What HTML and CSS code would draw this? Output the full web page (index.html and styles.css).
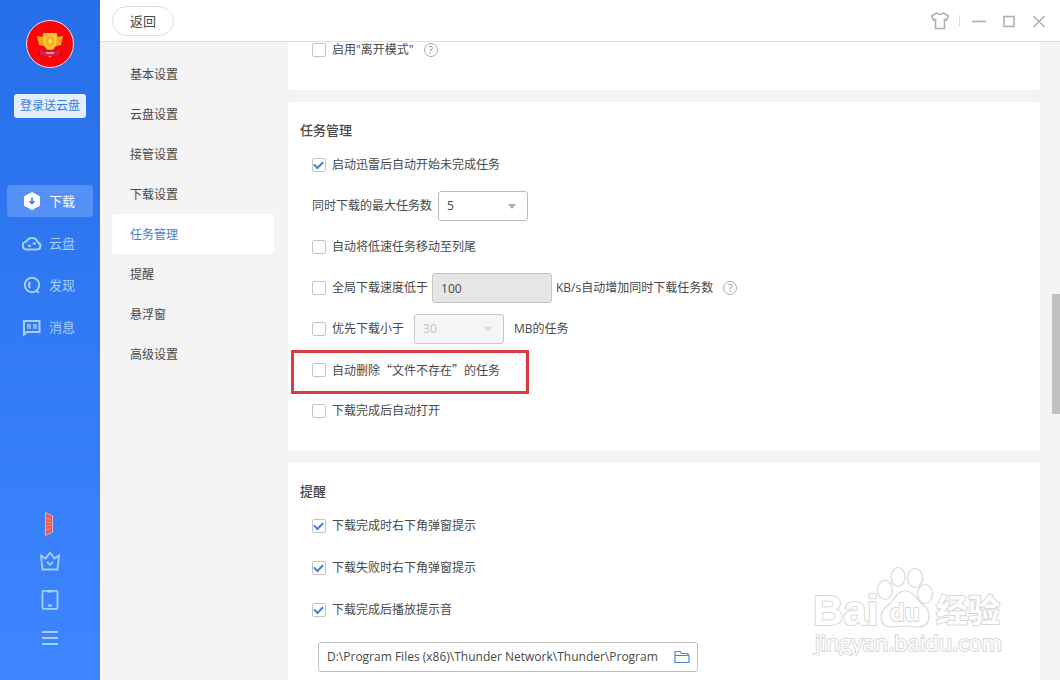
FILE: index.html
```html
<!DOCTYPE html>
<html lang="zh-CN">
<head>
    <meta charset="utf-8">
    <title>任务管理</title>
    <link rel="stylesheet" href="styles.css">
</head>
<body>
    <aside class="sidebar">
        <svg class="avatar" viewBox="0 0 48 48" role="img" aria-label="avatar">
            <circle cx="24" cy="24" r="23.5" fill="#fb0509" stroke="#f3dff0"/>
            <path d="M12 36l3-6h18l3 6-5-1-7 2-7-2z" fill="#a80f2c"/>
            <path d="M11 16l5 1 2-4h12l2 4 5-1-2 9-5 1-3 4h-6l-3-4-5-1z" fill="#f5a81c"/>
            <path d="M17 13h14l-1 12-4 4h-4l-4-4z" fill="#ffc52e"/>
            <path d="M24 15l4 3v6l-4 3-4-3v-6z" fill="#f7b020"/>
            <path d="M24 17l2 4-2 4-2-4z" fill="#ffd95a"/>
            <path d="M14 30q10 2 20 0v5q-10 2-20 0z" fill="#d91f45"/>
            <path d="M20 33h8" stroke="#f7a3b0" stroke-width="1.5"/>
            <path d="M22 36h4l-2 1.500z" fill="#f5a81c"/>
        </svg>
        <button class="login">登录送云盘</button>

        <nav class="menu">
            <a href="#" class="active">
                <svg width="20" height="20" viewBox="0 0 20 20">
                    <path d="M10 1.500l7.500 4v9l-7.500 4-7.500-4v-9z" fill="#fff" stroke="#fff" stroke-linejoin="round"/>
                    <path d="M10 6.500v6M7.500 10l2.500 2.600 2.500-2.600" fill="none" stroke="#3b7cf0" stroke-width="1.600"/>
                </svg>下载</a>
            <a href="#">
                <svg width="20" height="20" viewBox="0 0 20 20" class="line">
                    <path d="M5 16.500a4 4 0 0 1-.5-8 6 6 0 0 1 11.300 1A3.600 3.600 0 0 1 15.500 16.500z"/>
                    <path d="M6 12.800h3M10.500 10.500h3.500"/>
                </svg>云盘</a>
            <a href="#">
                <svg width="20" height="20" viewBox="0 0 20 20" class="line">
                    <circle cx="10" cy="10" r="7.200"/>
                    <path d="M13.500 15l3.500 3M8 7q-2 3 0 6"/>
                </svg>发现</a>
            <a href="#">
                <svg width="20" height="20" viewBox="0 0 20 20" class="line">
                    <path d="M2 4h15.500v11H5l-3 2.500z"/>
                    <path d="M5 8h3v4M11 8h3v4M6 8v4M12 8v4" stroke-width="1.300"/>
                </svg>消息</a>
        </nav>

        <div class="tools">
            <button aria-label="活动">
                <svg width="20" height="26" viewBox="0 0 20 26">
                    <path d="M5.500 1.500L12.500 5v16l-7 3.500z" fill="#f4544c" stroke="#d9b4dc"/>
                    <path d="M7 7l4 2M7 11l4 1M7 15l4-1M7 19l4-2" stroke="#ff9d7c" stroke-width="1.200"/>
                </svg>
            </button>
            <button aria-label="会员">
                <svg width="22" height="20" viewBox="0 0 22 20" class="line thin">
                    <path d="M2 3.500l4.500 3L11 .8l4.500 5.700 4.500-3-1.500 14h-15z"/>
                    <path d="M8 9.800l3 3 3-3"/>
                </svg>
            </button>
            <button aria-label="手机">
                <svg width="20" height="20" viewBox="0 0 20 20" class="line thin">
                    <rect x="2.500" y="0.800" width="15" height="18" rx="1"/>
                    <path d="M7 1.500h6M8 15.500h4"/>
                </svg>
            </button>
            <button aria-label="菜单">
                <svg width="20" height="20" viewBox="0 0 20 20" class="line thin">
                    <path d="M2 4h16M2 10h16M2 16h16"/>
                </svg>
            </button>
        </div>
    </aside>

    <div class="window">
        <header class="topbar">
            <button class="back">返回</button>
            <div class="controls">
                <button aria-label="皮肤">
                    <svg width="20" height="20" viewBox="0 0 20 20">
                        <path d="M6.500 2q3.500 3 7 0l5 3-2 4-2-.5v9h-9v-9l-2 .5-2-4z"/>
                    </svg>
                </button>
                <span class="divider"></span>
                <button aria-label="最小化">
                    <svg width="14" height="20" viewBox="0 0 14 20"><path d="M0 10.500h14"/></svg>
                </button>
                <button aria-label="最大化">
                    <svg width="14" height="20" viewBox="0 0 14 20"><path d="M2 5.500h10v10H2z"/></svg>
                </button>
                <button aria-label="关闭">
                    <svg width="14" height="20" viewBox="0 0 14 20"><path d="M1.500 5l11 11M12.500 5l-11 11"/></svg>
                </button>
            </div>
        </header>

        <div class="body">
            <nav class="settings-nav">
                <a href="#">基本设置</a>
                <a href="#">云盘设置</a>
                <a href="#">接管设置</a>
                <a href="#">下载设置</a>
                <a href="#" class="active">任务管理</a>
                <a href="#">提醒</a>
                <a href="#">悬浮窗</a>
                <a href="#">高级设置</a>
            </nav>

            <main class="content">
                <section class="card card-cut">
                    <div class="row">
                        <label><input type="checkbox">启用"离开模式"</label>
                        <span class="help">?</span>
                    </div>
                </section>

                <section class="card card-tasks">
                    <h2>任务管理</h2>
                    <div class="rows">
                        <div class="row">
                            <label><input type="checkbox" checked>启动迅雷后自动开始未完成任务</label>
                        </div>
                        <div class="row">
                            <label for="max-tasks">同时下载的最大任务数</label>
                            <span class="select">
                                <select id="max-tasks"><option>5</option></select>
                            </span>
                        </div>
                        <div class="row">
                            <label><input type="checkbox">自动将低速任务移动至列尾</label>
                        </div>
                        <div class="row tight">
                            <label><input type="checkbox">全局下载速度低于</label>
                            <input type="text" class="speed" id="speed" value="100" disabled>
                            <label for="speed">KB/s自动增加同时下载任务数</label>
                            <span class="help">?</span>
                        </div>
                        <div class="row wide">
                            <label><input type="checkbox">优先下载小于</label>
                            <span class="select disabled">
                                <select id="size" disabled><option>30</option></select>
                            </span>
                            <label for="size">MB的任务</label>
                        </div>
                        <div class="row marked">
                            <label class="quoted"><input type="checkbox">自动删除“文件不存在”的任务</label>
                        </div>
                        <div class="row">
                            <label><input type="checkbox">下载完成后自动打开</label>
                        </div>
                    </div>
                </section>

                <section class="card card-notice">
                    <h2>提醒</h2>
                    <div class="rows">
                        <div class="row">
                            <label><input type="checkbox" checked>下载完成时右下角弹窗提示</label>
                        </div>
                        <div class="row">
                            <label><input type="checkbox" checked>下载失败时右下角弹窗提示</label>
                        </div>
                        <div class="row">
                            <label><input type="checkbox" checked>下载完成后播放提示音</label>
                        </div>
                    </div>
                    <div class="path">
                        <input type="text" aria-label="提示音" value="D:\Program Files (x86)\Thunder Network\Thunder\Program">
                        <button aria-label="浏览">
                            <svg width="16" height="14" viewBox="0 0 16 14">
                                <path d="M1 12.500v-11h5l1.500 2H14v2M1 5.500h14v7H1z" fill="none" stroke="#4a87d0" stroke-width="1.200"/>
                            </svg>
                        </button>
                    </div>
                </section>

                <div class="scroll-thumb"></div>

                <svg class="watermark" width="194" height="96" viewBox="0 0 194 96">
                    <text x="1" y="65" class="bai">Bai</text>
                    <ellipse cx="73" cy="30" rx="7.500" ry="9.500"/>
                    <ellipse cx="86" cy="17" rx="7" ry="9.500"/>
                    <ellipse cx="103" cy="18" rx="7.500" ry="9.500"/>
                    <ellipse cx="113" cy="34" rx="7.500" ry="9.500"/>
                    <path d="M93 31c9 0 12 9 18 14 10 8 7 22-5 22-7 0-7-1-13-1s-7 1-13 1c-13 0-14-14-5-21 7-5 9-15 18-15z"/>
                    <text x="78" y="61" class="du">du</text>
                    <text x="124" y="62" class="jy">经验</text>
                    <text x="3" y="91" class="url">jingyan.baidu.com</text>
                </svg>
            </main>
        </div>
    </div>
</body>
</html>
```

FILE: styles.css
```css
*, *::before, *::after {
    box-sizing: border-box;
}

body {
    margin: 0;
    height: 100vh;
    display: flex;
    overflow: hidden;
    background: #f4f4f4;
    color: #484848;
    font: 12px/18px "Open Sans", "Noto Sans CJK SC", sans-serif;
}

button, input, select {
    font: inherit;
    color: inherit;
    margin: 0;
}

button {
    padding: 0;
    border: 0;
    background: none;
    cursor: pointer;
}

a {
    color: inherit;
    text-decoration: none;
}

svg {
    display: block;
}

/* blue bar */
.sidebar {
    width: 100px;
    flex: none;
    padding: 20px 7px 32px;
    display: flex;
    flex-direction: column;
    align-items: center;
    background: linear-gradient(#266fe8, #3e85ff);
}

.avatar {
    width: 48px;
    height: 48px;
    flex: none;
}

.login {
    width: 72px;
    height: 24px;
    margin-top: 26px;
    border-radius: 3px;
    background: #e2effd;
    color: #3c7fd8;
}

.menu {
    align-self: stretch;
    margin-top: 67px;
    display: flex;
    flex-direction: column;
    gap: 10px;
}

.menu a {
    height: 32px;
    padding-left: 15px;
    display: flex;
    align-items: center;
    gap: 7px;
    border-radius: 4px;
    font-size: 13px;
    color: #a5d0fb;
}

.menu .active {
    background: #5490f5;
    color: #fff;
}

.line {
    fill: none;
    stroke: #a5d0fb;
    stroke-width: 2;
}

.thin {
    stroke-width: 1.8;
}

.tools {
    margin-top: auto;
    display: flex;
    flex-direction: column;
    align-items: center;
    gap: 18px;
}

.tools button {
    height: 20px;
    display: flex;
    align-items: center;
}

/* top bar */
.window {
    flex: 1;
    min-width: 0;
    display: flex;
    flex-direction: column;
}

.topbar {
    height: 42px;
    flex: none;
    padding: 0 14px 0 12px;
    display: flex;
    align-items: center;
    justify-content: space-between;
    background: #fff;
    border-bottom: 1px solid #dedede;
}

.back {
    width: 62px;
    height: 30px;
    border: 1px solid #dedede;
    border-radius: 15px;
    font-size: 13px;
}

.controls {
    display: flex;
    align-items: center;
    gap: 16px;
}

.controls svg {
    fill: none;
    stroke: #b0b0b0;
    stroke-width: 1.6;
}

.divider {
    width: 1px;
    height: 11px;
    margin: 0 -4px 0 -7px;
    background: #ddd;
}

.body {
    flex: 1;
    min-height: 0;
    display: flex;
}

.settings-nav {
    width: 188px;
    flex: none;
    padding: 12px 14px 0 12px;
}

.settings-nav a {
    height: 40px;
    padding: 2px 18px 0;
    display: flex;
    align-items: center;
    border-radius: 4px;
}

.settings-nav .active {
    background: #fff;
    color: #3f7fd0;
}

/* cards */
.content {
    position: relative;
    flex: 1;
    min-width: 0;
    padding-right: 20px;
    display: flex;
    flex-direction: column;
    gap: 12px;
    overflow: hidden;
}

.card {
    flex: none;
    padding: 18px 12px 25px;
    background: #fff;
    border-radius: 4px;
}

.card-cut {
    padding: 0 24px 32px;
    border-radius: 0 0 4px 4px;
}

.card h2 {
    margin: 0 0 10px;
    font-size: 13px;
    line-height: 20px;
    font-weight: 500;
}

.rows {
    padding-left: 12px;
    display: flex;
    flex-direction: column;
    gap: 11px;
}

.card-notice .rows {
    gap: 12px;
}

.row {
    position: relative;
    height: 30px;
    display: flex;
    align-items: center;
    gap: 6px;
}

.card-cut .row {
    height: 16px;
    gap: 10px;
}

.tight {
    gap: 4px;
}

.wide {
    gap: 10px;
}

.row label {
    display: flex;
    align-items: center;
    gap: 6px;
}

.quoted {
    font-family: "Noto Sans CJK SC", sans-serif;
}

input[type="checkbox"] {
    appearance: none;
    width: 14px;
    height: 14px;
    border: 1px solid #c4c4c4;
    border-radius: 2px;
    background: #fff;
}

input[type="checkbox"]:checked::before {
    content: "";
    display: block;
    width: 9px;
    height: 6px;
    margin: 2px 1px;
    border: solid #3f7fd0;
    border-width: 0 0 2px 2px;
    transform: rotate(-45deg);
}

.help {
    width: 14px;
    height: 14px;
    border: 1px solid #aaa;
    border-radius: 50%;
    font-size: 11px;
    line-height: 12px;
    text-align: center;
    color: #999;
}

.tight .help {
    margin-left: 6px;
}

.select {
    position: relative;
}

.select::after {
    content: "";
    position: absolute;
    right: 12px;
    top: 13px;
    border: solid transparent;
    border-width: 5px 4px 0;
    border-top-color: #aaa;
    pointer-events: none;
}

select {
    appearance: none;
    display: block;
    width: 90px;
    height: 30px;
    padding: 0 8px;
    border: 1px solid #bbb;
    border-radius: 3px;
    background: #fff;
}

.disabled select {
    background: #f5f5f5;
    border-color: #c8c8c8;
    color: #c4c4c4;
    opacity: 1;
}

.select.disabled::after {
    border-top-color: #ddd;
}

.speed {
    width: 120px;
    height: 30px;
    padding: 0 8px;
    border: 1px solid #c4c4c4;
    border-radius: 3px;
    background: #e6e6e6;
}

/* red frame round the option */
.marked::before {
    content: "";
    position: absolute;
    left: -21px;
    top: -5px;
    width: 238px;
    height: 44px;
    border: 3px solid #d93c3e;
    pointer-events: none;
}

.path {
    width: 380px;
    height: 30px;
    margin: 17px 0 0 18px;
    padding: 0 7px 0 8px;
    display: flex;
    align-items: center;
    gap: 10px;
    border: 1px solid #c0c0c0;
    border-radius: 3px;
}

.path input {
    flex: 1;
    min-width: 0;
    padding: 0;
    border: 0;
    outline: 0;
}

.scroll-thumb {
    position: absolute;
    right: 0;
    top: 252px;
    width: 8px;
    height: 120px;
    background: #c2c2c2;
}

.watermark {
    position: absolute;
    right: 54px;
    bottom: 24px;
    fill: #fff;
    stroke: #d8d8d8;
    stroke-width: 1.2;
    pointer-events: none;
}

.watermark text {
    font-weight: 700;
    paint-order: stroke;
    stroke-width: 2;
}

.bai {
    font-family: "Liberation Sans", sans-serif;
    font-size: 42px;
}

.du {
    font-family: "Liberation Sans", sans-serif;
    font-size: 24px;
}

.jy {
    font-family: "Noto Sans CJK SC", sans-serif;
    font-size: 32px;
}

.watermark .url {
    font-family: "Open Sans", sans-serif;
    font-size: 22px;
    font-weight: 400;
}
```
